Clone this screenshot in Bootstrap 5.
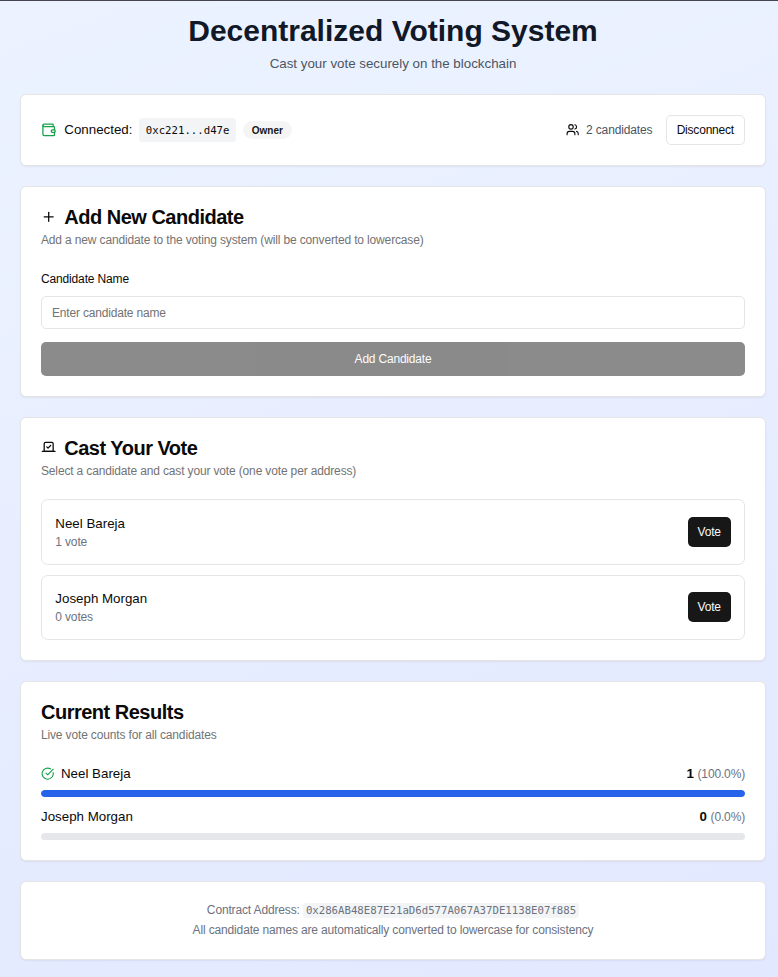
<!DOCTYPE html>
<html lang="en">
<head>
<meta charset="utf-8">
<meta name="viewport" content="width=device-width, initial-scale=1">
<title>Decentralized Voting System</title>
<link href="https://cdn.jsdelivr.net/npm/bootstrap@5.3.0/dist/css/bootstrap.min.css" rel="stylesheet">
<style>
  html { font-size: 13.3333px; }
  body {
    font-family: "Liberation Sans", Arial, sans-serif;
    font-size: 1rem; line-height: 1.5; color: #0a0a0a;
    min-height: 977px;
    background: linear-gradient(160deg, #ecf3ff, #e2e8ff) no-repeat;
    border-top: 1px solid #45454f;
  }
  .page { padding: 13px 12px 16px 20px; }
  .page-title { font-size: 30px; line-height: 2.5rem; font-weight: 700; color: #111827; }
  .page-sub { color: #4b5563; }
  .panel { border: 1px solid #e5e5e5; border-radius: 6px; box-shadow: 0 1px 2px rgba(0,0,0,.06); }
  .panel-title { font-size: 20px; line-height: 20px; font-weight: 700; letter-spacing: -.5px; margin-bottom: 5px; }
  .fs-12 { font-size: 12px; line-height: 1.25rem; letter-spacing: -.15px; }
  .muted { color: #737373; }
  .slate { color: #6b7280; }
  .mono { font-family: "DejaVu Sans Mono", "Liberation Mono", monospace; font-size: 10.7px; letter-spacing: 0; background: #f3f4f6; border-radius: 3.3px; }
  .mono-chip { padding: .35rem .5rem .15rem; line-height: 1.25rem; }
  .mono-inline { padding: 1px 3px; }
  .owner { font-size: 10px; line-height: 13.3px; font-weight: 700; background: #f5f5f5; color: #171717; padding: 3.2px 9px 2.2px; }
  .ico { fill: none; stroke: currentColor; stroke-width: 2; stroke-linecap: round; stroke-linejoin: round; flex: none; }
  .ico-lg { width: 1.25rem; height: 1.25rem; padding: 0 1.3px 1px 0; }
  .ico-sm { width: 1rem; height: 1rem; }
  .green { color: #16a34a; }
  .btn-line, .btn-ink { font-size: 12px; line-height: 1.25rem; height: 30px; padding: 0 10px; border-radius: 5px; letter-spacing: -.2px; }
  .btn-line { border: 1px solid #e5e5e5; background: #fff; color: #0a0a0a; }
  .btn-ink, .btn-ink:disabled { background: #171717; color: #fafafa; border: 0; }
  .btn-wide { height: 34px; padding-top: 1px; margin-top: 12.8px; }
  .btn-wide:disabled { opacity: .5; }
  .choice .btn { width: 43px; padding: 0; }
  .field-label { line-height: 1.25rem; padding-top: 2px; margin-bottom: 8.7px; }
  .field { height: 33px; font-size: 12px; padding: 1px 10px 0; border: 1px solid #e5e5e5; border-radius: 5px; letter-spacing: -.18px; }
  .field::placeholder { color: #737373; }
  .choice { border: 1px solid #e5e5e5; border-radius: 6.7px; }
  .gap-10 { gap: 10px; }
  .meter { height: 6.67px; border-radius: 4px; background: #e5e7eb; margin-top: .5rem; }
  .meter .progress-bar { background: #2563eb; border-radius: 4px; }
  .contract { margin-bottom: 2.2px; }
  .note { margin-bottom: .6px; }
</style>
</head>
<body>
<main class="page">
  <header class="text-center mb-4">
    <h1 class="page-title mb-2">Decentralized Voting System</h1>
    <p class="page-sub mb-0">Cast your vote securely on the blockchain</p>
  </header>

  <section class="panel bg-white p-4 mb-4 d-flex justify-content-between align-items-center">
    <div class="d-flex align-items-center gap-2">
      <svg class="ico ico-lg green" viewBox="0 0 24 24"><path d="M19 7V4a1 1 0 0 0-1-1H5a2 2 0 0 0 0 4h15a1 1 0 0 1 1 1v4h-3a2 2 0 0 0 0 4h3a1 1 0 0 0 1-1v-2a1 1 0 0 0-1-1"/><path d="M3 5v14a2 2 0 0 0 2 2h15a1 1 0 0 0 1-1v-4"/></svg>
      <span>Connected:</span>
      <span class="mono mono-chip">0xc221...d47e</span>
      <span class="owner rounded-pill">Owner</span>
    </div>
    <div class="d-flex align-items-center gap-3">
      <div class="d-flex align-items-center gap-2">
        <svg class="ico ico-sm" viewBox="0 0 24 24"><path d="M16 21v-2a4 4 0 0 0-4-4H6a4 4 0 0 0-4 4v2"/><circle cx="9" cy="7" r="4"/><path d="M22 21v-2a4 4 0 0 0-3-3.87"/><path d="M16 3.13a4 4 0 0 1 0 7.75"/></svg>
        <span class="fs-12 page-sub">2 candidates</span>
      </div>
      <button class="btn btn-line" type="button">Disconnect</button>
    </div>
  </section>

  <section class="panel bg-white p-4 mb-4">
    <h2 class="panel-title d-flex align-items-center gap-2">
      <svg class="ico ico-lg" viewBox="0 0 24 24"><path d="M5 12h14"/><path d="M12 5v14"/></svg>
      Add New Candidate
    </h2>
    <p class="fs-12 muted mb-4">Add a new candidate to the voting system (will be converted to lowercase)</p>
    <label class="fs-12 field-label d-block" for="name">Candidate Name</label>
    <input class="form-control field" id="name" type="text" placeholder="Enter candidate name">
    <button class="btn btn-ink btn-wide w-100" type="button" disabled>Add Candidate</button>
  </section>

  <section class="panel bg-white p-4 mb-4">
    <h2 class="panel-title d-flex align-items-center gap-2">
      <svg class="ico ico-lg" viewBox="0 0 24 24"><path d="m9 12 2 2 4-4"/><path d="M5 7c0-1.1.9-2 2-2h10a2 2 0 0 1 2 2v12H5V7Z"/><path d="M22 19H2"/></svg>
      Cast Your Vote
    </h2>
    <p class="fs-12 muted mb-4">Select a candidate and cast your vote (one vote per address)</p>
    <div class="d-flex flex-column gap-10">
      <div class="choice p-3 d-flex justify-content-between align-items-center">
        <div><div>Neel Bareja</div><div class="fs-12 slate">1 vote</div></div>
        <button class="btn btn-ink" type="button">Vote</button>
      </div>
      <div class="choice p-3 d-flex justify-content-between align-items-center">
        <div><div>Joseph Morgan</div><div class="fs-12 slate">0 votes</div></div>
        <button class="btn btn-ink" type="button">Vote</button>
      </div>
    </div>
  </section>

  <section class="panel bg-white p-4 mb-4">
    <h2 class="panel-title">Current Results</h2>
    <p class="fs-12 muted mb-4">Live vote counts for all candidates</p>
    <div class="d-flex flex-column gap-10">
      <div>
        <div class="d-flex justify-content-between align-items-center">
          <span class="d-flex align-items-center gap-2">
            <svg class="ico ico-sm green" viewBox="0 0 24 24"><path d="M21.801 10A10 10 0 1 1 17 3.335"/><path d="m9 11 3 3L22 4"/></svg>
            Neel Bareja
          </span>
          <span><b>1</b> <span class="fs-12 slate">(100.0%)</span></span>
        </div>
        <div class="progress meter"><div class="progress-bar" style="width:100%"></div></div>
      </div>
      <div>
        <div class="d-flex justify-content-between align-items-center">
          <span>Joseph Morgan</span>
          <span><b>0</b> <span class="fs-12 slate">(0.0%)</span></span>
        </div>
        <div class="progress meter"><div class="progress-bar" style="width:0%"></div></div>
      </div>
    </div>
  </section>

  <footer class="panel bg-white p-4 text-center slate fs-12">
    <p class="contract">Contract Address: <span class="mono mono-inline">0x286AB48E87E21aD6d577A067A37DE1138E07f885</span></p>
    <p class="note">All candidate names are automatically converted to lowercase for consistency</p>
  </footer>
</main>
<script src="https://cdn.jsdelivr.net/npm/bootstrap@5.3.0/dist/js/bootstrap.bundle.min.js"></script>
</body>
</html>
